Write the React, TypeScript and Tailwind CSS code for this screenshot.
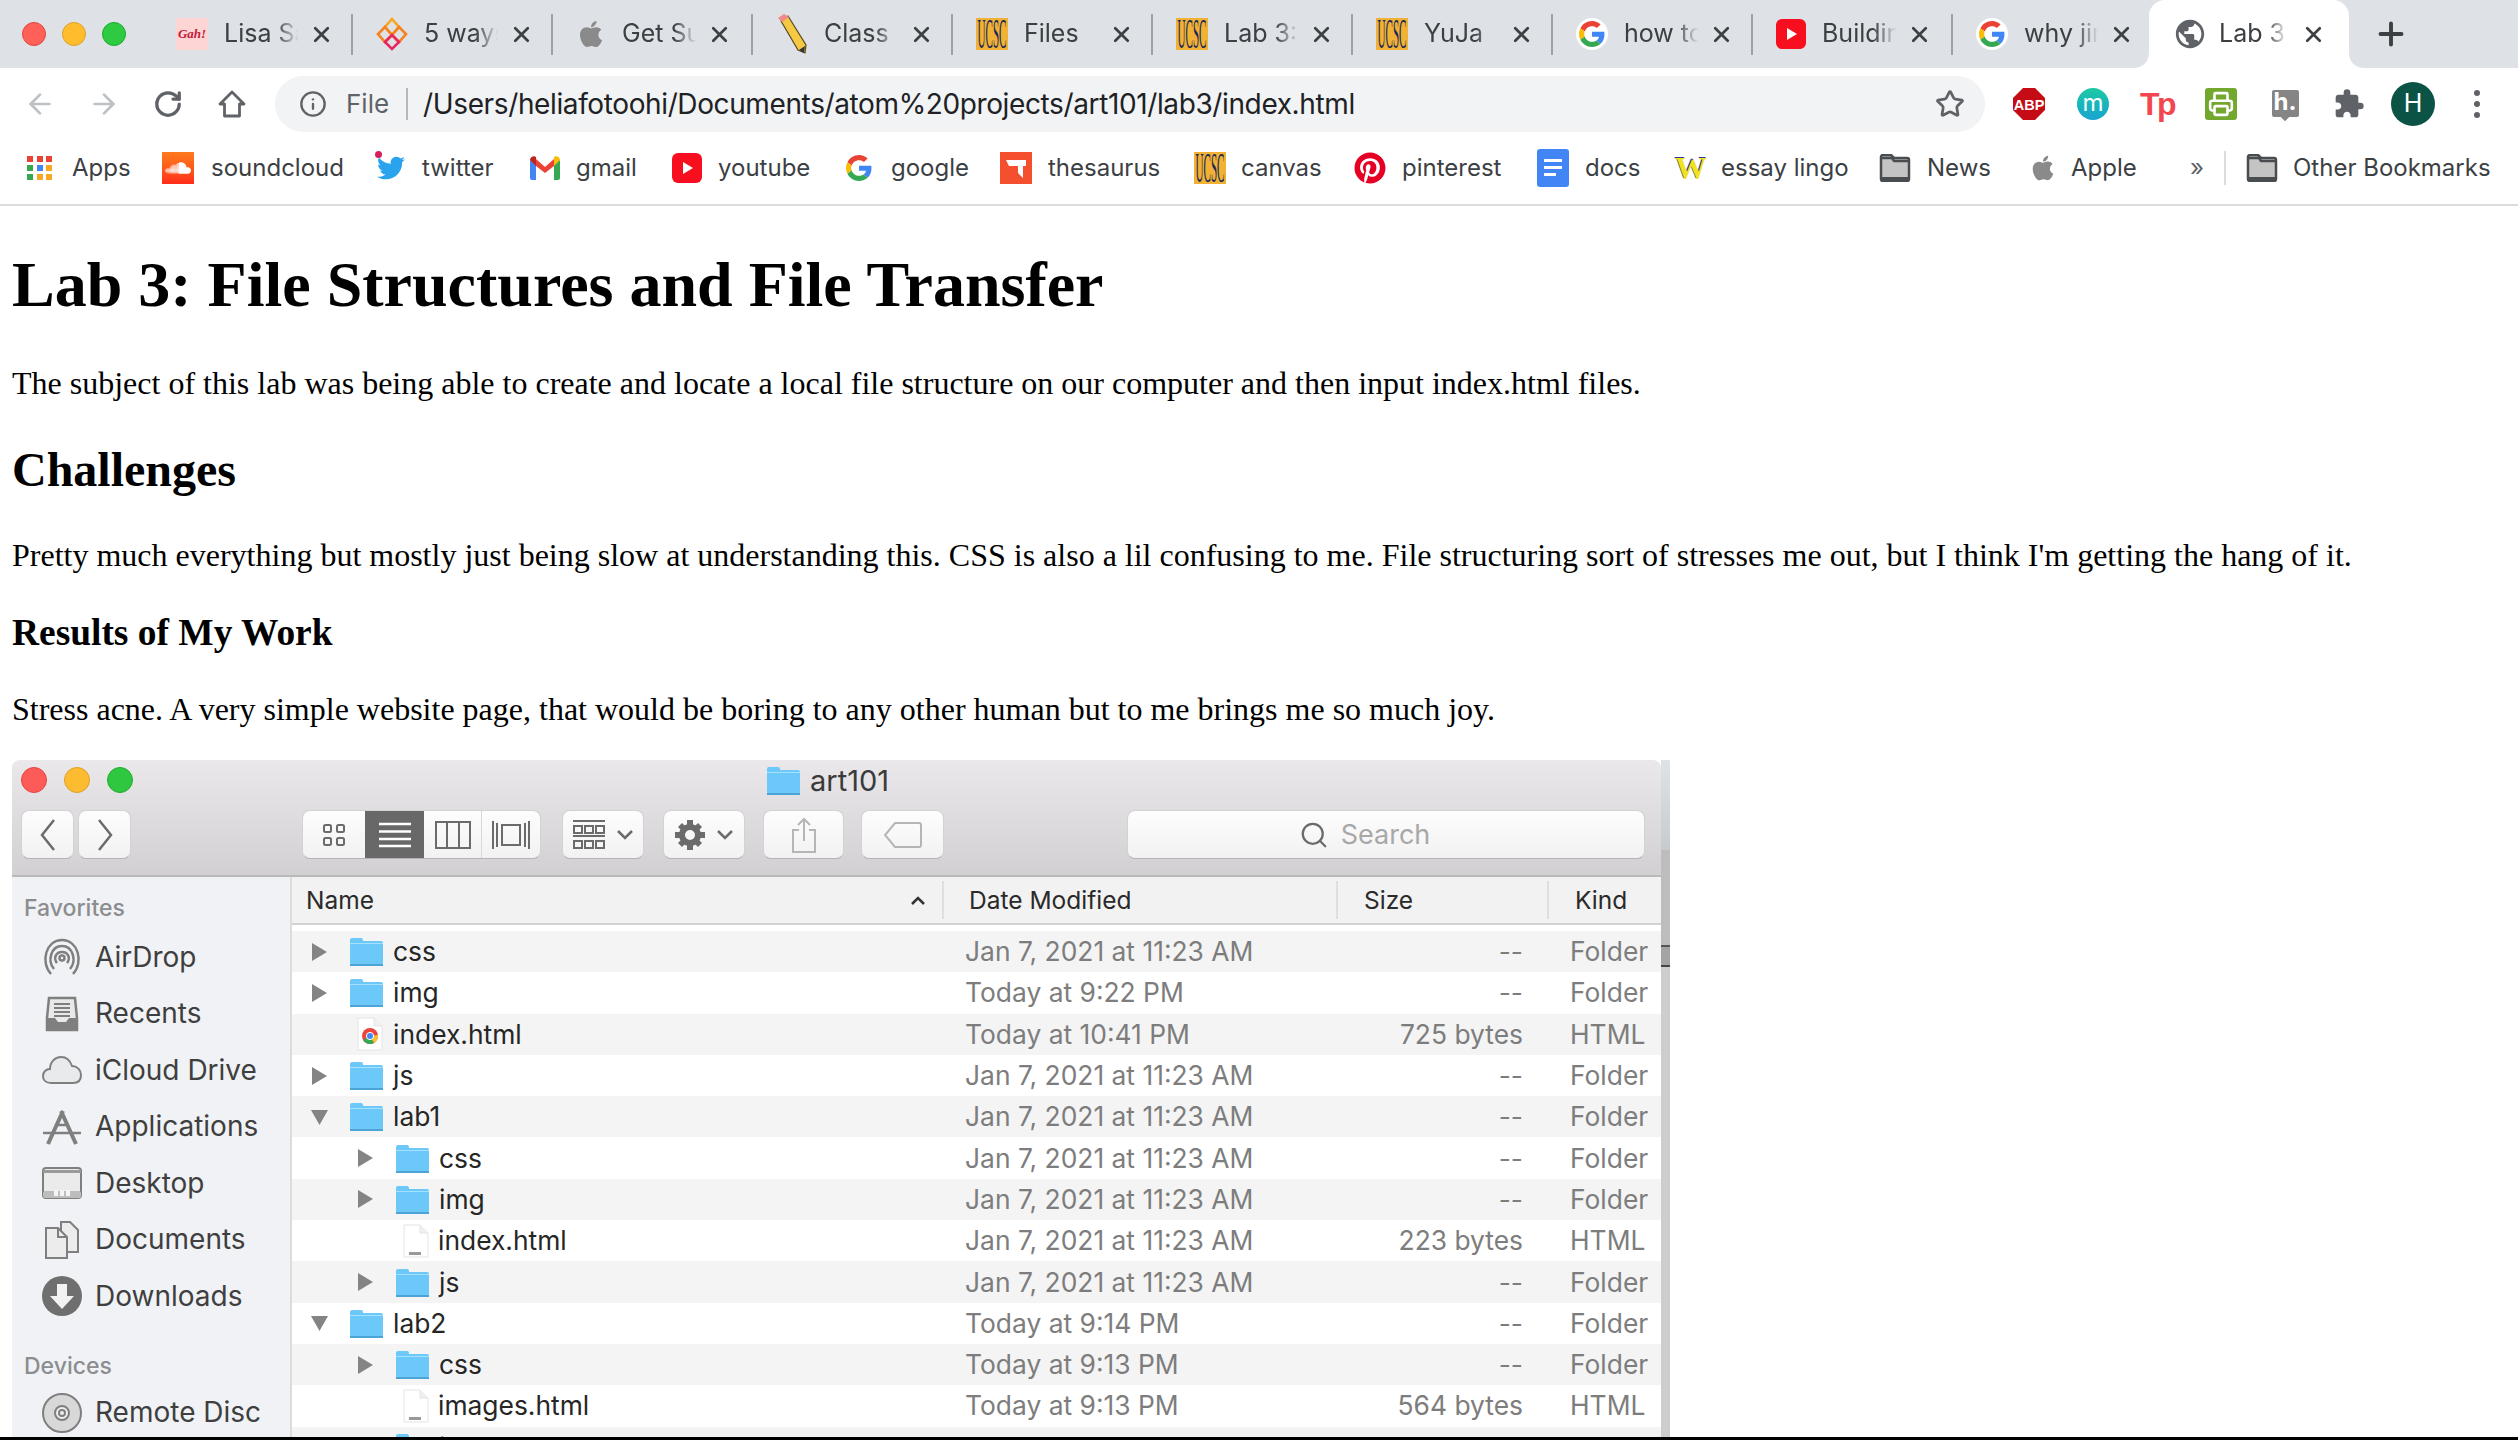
import { ArrowLeft, ArrowRight, Info, Plus, Printer, RotateCw, Search, Star, X } from 'lucide-react';
import { FaApple, FaPinterest, FaSoundcloud, FaTwitter } from 'react-icons/fa';
import { MdExtension, MdPublic } from 'react-icons/md';

function GoogleIcon({ size = 26 }: { size?: number }) {
  return (
    <svg width={size} height={size} viewBox="0 0 48 48">
      <path fill="#EA4335" d="M24 9.5c3.5 0 6.6 1.2 9.1 3.6l6.8-6.8C35.800 2.500 30.400 0 24 0 14.600 0 6.500 5.400 2.600 13.200l7.900 6.100C12.400 13.600 17.700 9.500 24 9.500z" />
      <path fill="#4285F4" d="M47 24.500c0-1.600-.1-3.100-.4-4.500H24v9h12.900c-.6 3-2.200 5.500-4.700 7.200l7.700 6C44.400 38.100 47 31.900 47 24.500z" />
      <path fill="#FBBC05" d="M10.500 28.700c-.5-1.500-.8-3-.8-4.700s.3-3.200.8-4.700l-7.900-6.100C.900 16.500 0 20.100 0 24s.900 7.500 2.600 10.800l7.900-6.100z" />
      <path fill="#34A853" d="M24 48c6.400 0 11.900-2.100 15.900-5.800l-7.700-6c-2.100 1.400-4.900 2.300-8.200 2.300-6.300 0-11.600-4.100-13.500-9.800l-7.900 6.100C6.500 42.600 14.600 48 24 48z" />
    </svg>
  );
}

function UcscIcon() {
  return (
    <svg width="32" height="32" viewBox="0 0 32 32" className="shrink-0">
      <rect width="32" height="32" fill="#f0b135" />
      <text transform="translate(16 30) scale(1 3.800)" textAnchor="middle" fontSize="11" textLength="29" lengthAdjust="spacingAndGlyphs" fontFamily="Liberation Serif" fill="#1c2a55">
        UCSC
      </text>
    </svg>
  );
}

function YoutubeIcon() {
  return (
    <svg width="30" height="32" viewBox="0 0 30 32" className="shrink-0">
      <rect y="1" width="30" height="30" rx="6" fill="#f70f1f" />
      <path d="M11 10l10 6-10 6z" fill="#fff" />
    </svg>
  );
}

function GmailIcon() {
  return (
    <svg width="30" height="24" viewBox="0 0 30 24" className="shrink-0">
      <path d="M0 4v18a2 2 0 002 2h4V8z" fill="#4285f4" />
      <path d="M30 4v18a2 2 0 01-2 2h-4V8z" fill="#34a853" />
      <path d="M6 3l9 8 9-8v7l-9 7-9-7z" fill="#ea4335" />
      <path d="M0 4c0-3 4-5 6-3v9z" fill="#c5221f" />
      <path d="M30 4c0-3-4-5-6-3v9z" fill="#fbbc04" />
    </svg>
  );
}

function AppsIcon() {
  const cols = ['#ea4335', '#ea4335', '#ea4335', '#34a853', '#4285f4', '#f9a825', '#34a853', '#f9a825', '#f9a825'];
  return (
    <div className="grid grid-cols-3 gap-[3px] w-[26px] shrink-0">
      {cols.map((c, i) => (
        <svg key={i} width="6" height="6" viewBox="0 0 6 6">
          <rect width="6" height="6" fill={c} />
        </svg>
      ))}
    </div>
  );
}

function ChromeFolder() {
  return (
    <svg width="32" height="28" viewBox="0 0 32 28" className="shrink-0">
      <path d="M2 3a2 2 0 012-2h8l3 3h13a2 2 0 012 2v19a2 2 0 01-2 2H4a2 2 0 01-2-2z" fill="#c4c4c4" stroke="#4a4d50" strokeWidth="2.500" />
      <path d="M2 4h11l2 3h15" fill="none" stroke="#4a4d50" strokeWidth="2.500" />
      <rect x="2" y="23" width="28" height="4" fill="#4a4d50" />
    </svg>
  );
}

function Soundcloud() {
  return (
    <div className="w-8 h-8 shrink-0 flex items-center justify-center bg-linear-to-b from-[#fe7a1c] to-[#fe2a1a]">
      <FaSoundcloud size={26} color="#fff" />
    </div>
  );
}

function Twitter() {
  return (
    <div className="relative w-8 h-8 shrink-0 flex items-center justify-center">
      <FaTwitter size={28} color="#2aa3ef" />
      <span className="absolute left-0 top-[-1px] w-[7px] h-[7px] rounded-full bg-[#d81e5b]" />
    </div>
  );
}

function Thesaurus() {
  return (
    <svg width="32" height="32" viewBox="0 0 32 32" className="shrink-0">
      <rect width="32" height="32" fill="#f4502f" />
      <path d="M6 8h20v6h-3v12l-5-5v-7H9z" fill="#fff" />
    </svg>
  );
}

function Docs() {
  return (
    <svg width="32" height="38" viewBox="0 0 32 38" className="shrink-0">
      <rect width="32" height="38" rx="3" fill="#4285f4" />
      <rect x="7" y="10" width="18" height="3" fill="#fff" />
      <rect x="7" y="17" width="18" height="3" fill="#fff" />
      <rect x="7" y="24" width="12" height="3" fill="#fff" />
    </svg>
  );
}

const bookmarks: { label: string; icon: React.ReactNode; cls: string; gap: string }[] = [
  { label: 'Apps', icon: <AppsIcon />, cls: 'w-[135px]', gap: 'gap-[19px]' },
  { label: 'soundcloud', icon: <Soundcloud />, cls: 'w-[213px]', gap: 'gap-[17px]' },
  { label: 'twitter', icon: <Twitter />, cls: 'w-[155px]', gap: 'gap-[15px]' },
  { label: 'gmail', icon: <GmailIcon />, cls: 'w-[142px]', gap: 'gap-[16px]' },
  { label: 'youtube', icon: <YoutubeIcon />, cls: 'w-[174px]', gap: 'gap-[16px]' },
  { label: 'google', icon: <GoogleIcon />, cls: 'w-[154px]', gap: 'gap-[19px]' },
  { label: 'thesaurus', icon: <Thesaurus />, cls: 'w-[194px]', gap: 'gap-[16px]' },
  { label: 'canvas', icon: <UcscIcon />, cls: 'w-[160px]', gap: 'gap-[15px]' },
  { label: 'pinterest', icon: <FaPinterest size={32} color="#e60023" className="shrink-0" />, cls: 'w-[183px]', gap: 'gap-[16px]' },
  { label: 'docs', icon: <Docs />, cls: 'w-[138px]', gap: 'gap-[16px]' },
  { label: 'essay lingo', icon: <span className="w-[30px] text-center text-[32px] font-bold text-[#f2e21d] [text-shadow:-1px_-1px_0_#2d3a9c] font-['Liberation_Serif',serif]">W</span>, cls: 'w-[204px]', gap: 'gap-[16px]' },
  { label: 'News', icon: <ChromeFolder />, cls: 'w-[150px]', gap: 'gap-[16px]' },
  { label: 'Apple', icon: <FaApple size={28} color="#8a8a8a" className="shrink-0" />, cls: 'w-[161px]', gap: 'gap-[14px]' },
];

const tabs: { title: string; icon: React.ReactNode }[] = [
  {
    title: 'Lisa Sa',
    icon: (
      <div className="w-8 h-8 shrink-0 bg-[#fdd5d5] flex items-center justify-center text-[13px] italic font-bold text-[#c0213a] font-['Liberation_Serif',serif]">
        Gah!
      </div>
    ),
  },
  {
    title: '5 ways',
    icon: (
      <svg width="32" height="34" viewBox="0 0 32 34" className="shrink-0" fill="none" strokeWidth="2.600">
        <path d="M16 2l7 8-7 8-7-8z" stroke="#f6a623" />
        <path d="M9 10l7 8-7 7-7-8z" stroke="#f5811f" />
        <path d="M23 10l7 7-7 8-7-7z" stroke="#f5811f" />
        <path d="M9 25l7-7 7 7-7 7z" stroke="#e8265e" />
      </svg>
    ),
  },
  { title: 'Get Su', icon: <FaApple size={30} color="#8a8a8a" className="shrink-0" /> },
  {
    title: 'Class I',
    icon: (
      <svg width="32" height="40" viewBox="0 0 32 40" className="shrink-0">
        <path d="M5 7l7-5 18 29 -1 8 -7-3z" fill="#f6c945" stroke="#5b4a1f" strokeWidth="1.200" />
        <path d="M2 4l6-4 5 3-7 5z" fill="#f08a8a" />
        <path d="M23 36l6-4-1 7z" fill="#333" />
      </svg>
    ),
  },
  { title: 'Files', icon: <UcscIcon /> },
  { title: 'Lab 3:', icon: <UcscIcon /> },
  { title: 'YuJa', icon: <UcscIcon /> },
  {
    title: 'how to',
    icon: (
      <div className="w-8 h-8 shrink-0 rounded-full bg-white flex items-center justify-center">
        <GoogleIcon size={26} />
      </div>
    ),
  },
  { title: 'Buildin', icon: <YoutubeIcon /> },
  {
    title: 'why jin',
    icon: (
      <div className="w-8 h-8 shrink-0 rounded-full bg-white flex items-center justify-center">
        <GoogleIcon size={26} />
      </div>
    ),
  },
];

function Tab({ title, icon, last }: { title: string; icon: React.ReactNode; last: boolean }) {
  return (
    <>
      <div className="w-[198px] flex items-center pl-[23px]">
        {icon}
        <span className="ml-4 w-[76px] overflow-hidden whitespace-nowrap text-[25px] text-[#3c4043] [mask-image:linear-gradient(to_right,black_68%,transparent_98%)]">
          {title}
        </span>
        <X size={25} strokeWidth={2.6} color="#3c4043" className="ml-[9px] shrink-0" />
      </div>
      {!last && <div className="w-[2px] h-[41px] bg-[#9da0a5] shrink-0" />}
    </>
  );
}

function TabStrip() {
  return (
    <div className="h-[68px] bg-[#dee1e6] flex items-center">
      <div className="w-[153px] shrink-0 flex items-center gap-4 pl-[22px]">
        <span className="w-6 h-6 rounded-full bg-[#ff6159] border border-[#e0443e]" />
        <span className="w-6 h-6 rounded-full bg-[#ffbd2e] border border-[#dea123]" />
        <span className="w-6 h-6 rounded-full bg-[#2ecb42] border border-[#1aab29]" />
      </div>
      {tabs.map((t, i) => (
        <Tab key={i} title={t.title} icon={t.icon} last={i === tabs.length - 1} />
      ))}
      <div className="relative -ml-[2px] w-[200px] h-[68px] bg-white rounded-t-[16px] flex items-center pl-[24px] shrink-0">
        <svg width="16" height="16" viewBox="0 0 16 16" className="absolute bottom-0 left-[-16px]">
          <path d="M16 0v16H0c10 0 16-6 16-16z" fill="#fff" />
        </svg>
        <svg width="16" height="16" viewBox="0 0 16 16" className="absolute bottom-0 right-[-16px]">
          <path d="M0 0v16h16C6 16 0 10 0 0z" fill="#fff" />
        </svg>
        <MdPublic size={34} color="#5f6368" className="shrink-0" />
        <span className="ml-[12px] w-[70px] overflow-hidden whitespace-nowrap text-[25px] text-[#3c4043] [mask-image:linear-gradient(to_right,black_68%,transparent_98%)]">
          Lab 3:
        </span>
        <X size={25} strokeWidth={2.6} color="#3c4043" className="ml-[12px] shrink-0" />
      </div>
      <Plus size={36} strokeWidth={2.6} color="#3c4043" className="ml-6 shrink-0" />
    </div>
  );
}

function NavBtn({ children }: { children: React.ReactNode }) {
  return <div className="w-16 h-[56px] flex items-center justify-center shrink-0">{children}</div>;
}

function Toolbar() {
  return (
    <div className="h-[69px] bg-white flex items-center pl-2 pt-[2px]">
      <NavBtn><ArrowLeft size={32} strokeWidth={2} color="#bdc1c6" /></NavBtn>
      <NavBtn><ArrowRight size={32} strokeWidth={2} color="#bdc1c6" /></NavBtn>
      <NavBtn><RotateCw size={30} strokeWidth={2.6} color="#5f6368" /></NavBtn>
      <NavBtn>
        <svg width="30" height="30" viewBox="0 0 30 30" fill="none" stroke="#5f6368" strokeWidth="2.800" strokeLinejoin="round">
          <path d="M15 3L3 15h4.500v12h15V15H27z" />
        </svg>
      </NavBtn>
      <div className="ml-[11px] w-[1710px] h-[56px] rounded-full bg-[#f1f3f4] flex items-center pl-[24px] pr-[20px] shrink-0">
        <Info size={28} strokeWidth={2} color="#5f6368" className="shrink-0" />
        <span className="ml-[19px] text-[26px] text-[#5f6368]">File</span>
        <span className="ml-[17px] w-[2px] h-[32px] bg-[#b5b8bc]" />
        <span className="ml-[15px] text-[28px] text-[#202124] whitespace-nowrap tracking-[-0.38px]">/Users/heliafotoohi/Documents/atom%20projects/art101/lab3/index.html</span>
        <Star size={30} strokeWidth={2.2} color="#5f6368" className="ml-auto shrink-0" />
      </div>
      <div className="ml-3 flex items-center">
        <NavBtn>
          <svg width="32" height="32" viewBox="0 0 32 32">
            <path d="M10 0h12l10 10v12L22 32H10L0 22V10z" fill="#c50b13" />
            <text x="16" y="21.500" textAnchor="middle" fontSize="14.500" fontWeight="700" fill="#fff" fontFamily="Liberation Sans">ABP</text>
          </svg>
        </NavBtn>
        <NavBtn>
          <div className="w-8 h-8 rounded-full bg-linear-to-b from-[#1fc9a3] to-[#1ba3d1] flex items-center justify-center text-white text-[24px] leading-none pb-[2px]">m</div>
        </NavBtn>
        <NavBtn>
          <span className="text-[#f2474f] text-[32px] font-extrabold leading-none tracking-[-2.500px] font-['Liberation_Sans',sans-serif]">Tp</span>
        </NavBtn>
        <NavBtn>
          <div className="w-8 h-8 rounded-[3px] bg-[#73a72d] flex items-center justify-center">
            <Printer size={26} strokeWidth={2.4} color="#fff" />
          </div>
        </NavBtn>
        <NavBtn>
          <div className="relative w-[27px] h-[27px] rounded-[2px] bg-[#858585] flex items-center justify-center text-white font-bold text-[24px] leading-none pb-[3px]">
            h.
            <span className="absolute bottom-[-3px] left-[10px] w-[6px] h-[6px] rotate-45 bg-[#858585]" />
          </div>
        </NavBtn>
        <NavBtn><MdExtension size={32} color="#5f6368" /></NavBtn>
        <NavBtn>
          <div className="w-[44px] h-[44px] rounded-full bg-[#0b5345] flex items-center justify-center text-white text-[25px]">H</div>
        </NavBtn>
        <NavBtn>
          <div className="flex flex-col gap-[5px]">
            <span className="w-[6px] h-[6px] rounded-full bg-[#5f6368]" />
            <span className="w-[6px] h-[6px] rounded-full bg-[#5f6368]" />
            <span className="w-[6px] h-[6px] rounded-full bg-[#5f6368]" />
          </div>
        </NavBtn>
      </div>
    </div>
  );
}

function BookmarksBar() {
  return (
    <div className="h-[69px] bg-white border-b-2 border-[#dadce0] flex items-center pl-[27px] pb-[5px] text-[24px] text-[#3c4043]">
      {bookmarks.map((b) => (
        <div key={b.label} className={`${b.cls} ${b.gap} shrink-0 flex items-center whitespace-nowrap`}>
          {b.icon}
          <span>{b.label}</span>
        </div>
      ))}
      <span className="w-[34px] text-[#5f6368]">»</span>
      <span className="w-[2px] h-[34px] bg-[#dadce0]" />
      <div className="ml-[20px] flex items-center gap-[15px] whitespace-nowrap">
        <ChromeFolder />
        <span>Other Bookmarks</span>
      </div>
    </div>
  );
}

function Folder() {
  return (
    <svg width="33" height="29" viewBox="0 0 33 29" className="shrink-0">
      <path d="M0 3a2 2 0 012-2h9a2 2 0 012 2v1h18a2 2 0 012 2v20a2 2 0 01-2 2H2a2 2 0 01-2-2z" fill="#6cc8f9" />
      <path d="M0 6h33v1H0z" fill="#a5e0fd" />
      <path d="M0 27h33v2H0z" fill="#4ba3d6" />
    </svg>
  );
}

function HtmlFile({ chrome }: { chrome?: boolean }) {
  return (
    <svg width="26" height="34" viewBox="0 0 26 34" className="shrink-0">
      <path d="M1 1h16l8 8v24H1z" fill="#fff" stroke="#e4e4e4" />
      <path d="M17 1v8h8" fill="#f0f0f0" stroke="#e4e4e4" />
      {chrome ? (
        <g>
          <circle cx="13" cy="19" r="8" fill="#e8453c" />
          <path d="M13 19l-7 4a8 8 0 0011 3z" fill="#34a853" />
          <path d="M13 19l8-1a8 8 0 01-4 8z" fill="#fbc02d" />
          <circle cx="13" cy="19" r="3.600" fill="#4285f4" stroke="#fff" />
        </g>
      ) : (
        <rect x="6" y="28" width="12" height="3" fill="#9a9a9a" />
      )}
    </svg>
  );
}

function Tri({ open }: { open?: boolean }) {
  return (
    <svg width="17" height="20" viewBox="0 0 17 20" className="shrink-0">
      {open ? <path d="M0 3h17l-8.500 15z" fill="#848484" /> : <path d="M1 1l15 9-15 9z" fill="#848484" />}
    </svg>
  );
}

type Row = { name: string; depth: 0 | 1; kind: 'Folder' | 'HTML'; open?: boolean; chrome?: boolean; date: string; size: string };

const J = 'Jan 7, 2021 at 11:23 AM';
const rows: Row[] = [
  { name: 'css', depth: 0, kind: 'Folder', date: J, size: '--' },
  { name: 'img', depth: 0, kind: 'Folder', date: 'Today at 9:22 PM', size: '--' },
  { name: 'index.html', depth: 0, kind: 'HTML', chrome: true, date: 'Today at 10:41 PM', size: '725 bytes' },
  { name: 'js', depth: 0, kind: 'Folder', date: J, size: '--' },
  { name: 'lab1', depth: 0, kind: 'Folder', open: true, date: J, size: '--' },
  { name: 'css', depth: 1, kind: 'Folder', date: J, size: '--' },
  { name: 'img', depth: 1, kind: 'Folder', date: J, size: '--' },
  { name: 'index.html', depth: 1, kind: 'HTML', date: J, size: '223 bytes' },
  { name: 'js', depth: 1, kind: 'Folder', date: J, size: '--' },
  { name: 'lab2', depth: 0, kind: 'Folder', open: true, date: 'Today at 9:14 PM', size: '--' },
  { name: 'css', depth: 1, kind: 'Folder', date: 'Today at 9:13 PM', size: '--' },
  { name: 'images.html', depth: 1, kind: 'HTML', date: 'Today at 9:13 PM', size: '564 bytes' },
  { name: 'js', depth: 1, kind: 'Folder', date: 'Today at 9:13 PM', size: '--' },
];

function FileRow({ row, odd }: { row: Row; odd: boolean }) {
  return (
    <div className={`h-[41.3px] flex items-center shrink-0 ${odd ? 'bg-[#f4f4f4]' : 'bg-white'}`}>
      <div className={`w-[652px] flex items-center shrink-0 ${row.depth ? 'pl-[65px]' : 'pl-[19px]'}`}>
        {row.kind === 'Folder' ? (
          <>
            <Tri open={row.open} />
            <span className="ml-[22px] flex"><Folder /></span>
            <span className="ml-[10px] text-[#262626]">{row.name}</span>
          </>
        ) : (
          <>
            <span className="ml-[43px] w-[31px] flex justify-center"><HtmlFile chrome={row.chrome} /></span>
            <span className={`${row.depth ? 'ml-[7px]' : 'ml-[8px]'} text-[#262626]`}>{row.name}</span>
          </>
        )}
      </div>
      <div className="w-[394px] pl-[21px] shrink-0 text-[#7d7d7d] whitespace-nowrap">{row.date}</div>
      <div className="w-[211px] pr-[26px] shrink-0 text-right text-[#7d7d7d]">{row.size}</div>
      <div className="pl-[21px] text-[#7d7d7d]">{row.kind}</div>
    </div>
  );
}

function SideItem({ label, icon }: { label: string; icon: React.ReactNode }) {
  return (
    <div className="h-[56.500px] flex items-center pl-[30px] shrink-0">
      <span className="w-10 flex justify-center">{icon}</span>
      <span className="ml-[13px] text-[#3f3f3f] whitespace-nowrap">{label}</span>
    </div>
  );
}

const G = '#7f7f7f';

function Sidebar() {
  return (
    <div className="w-[280px] shrink-0 bg-[#f0f2f5] border-r-2 border-[#dcdcdc] text-[28px] pt-[16px] overflow-hidden">
      <div className="pl-3 h-[30px] text-[23px] font-medium leading-[30px] text-[#8b8d90]">Favorites</div>
      <div className="mt-[6px]">
        <SideItem
          label="AirDrop"
          icon={
            <svg width="40" height="38" viewBox="0 0 40 38" fill="none" stroke={G} strokeWidth="2.500">
              <path d="M9 36C-2 24 4 2 20 2s22 22 11 34" />
              <path d="M12 31C5 23 9 8 20 8s15 15 8 23" />
              <path d="M15 25c-4-5-1-11 5-11s9 6 5 11" />
              <circle cx="20" cy="20" r="2.500" />
            </svg>
          }
        />
        <SideItem
          label="Recents"
          icon={
            <svg width="34" height="36" viewBox="0 0 34 36">
              <path d="M4 2h26l2 20v12H2V22z" fill="#e9e9e9" stroke={G} strokeWidth="2.500" />
              <path d="M9 8h16M9 12h16M9 16h16M9 20h16" stroke={G} strokeWidth="2" />
              <path d="M2 22h8l3 4h8l3-4h8v12H2z" fill={G} />
            </svg>
          }
        />
        <SideItem
          label="iCloud Drive"
          icon={
            <svg width="40" height="30" viewBox="0 0 40 30">
              <path d="M9 28C3 28 1 24 1 21c0-4 3-7 7-7 0-7 5-12 11-12 5 0 9 3 11 9 5 0 9 4 9 9 0 5-3 8-8 8z" fill="#e9eaec" stroke={G} strokeWidth="2" />
            </svg>
          }
        />
        <SideItem
          label="Applications"
          icon={
            <svg width="40" height="38" viewBox="0 0 40 38" fill="none" stroke={G}>
              <path d="M6 36L21 3M34 36L19 3" strokeWidth="4" />
              <path d="M1 25h38" strokeWidth="2.500" />
              <path d="M15 17h10" strokeWidth="2.500" />
            </svg>
          }
        />
        <SideItem
          label="Desktop"
          icon={
            <svg width="40" height="32" viewBox="0 0 40 32">
              <rect x="1" y="1" width="38" height="30" rx="3" fill="#ebebeb" stroke={G} strokeWidth="2" />
              <rect x="1" y="3" width="38" height="3" fill="#9a9a9a" />
              <rect x="1" y="24" width="38" height="7" rx="2" fill="#bdbdbd" />
              <path d="M12 23h4v6h-4zM18 23h4v6h-4zM24 23h4v6h-4z" fill="#f4f4f4" />
            </svg>
          }
        />
        <SideItem
          label="Documents"
          icon={
            <svg width="36" height="38" viewBox="0 0 36 38" fill="#ececec" stroke={G} strokeWidth="2">
              <path d="M17 1h9l8 8v22H17z" />
              <path d="M2 7h12l9 9v21H2z" />
              <path d="M14 7v9h9" fill="none" />
            </svg>
          }
        />
        <SideItem
          label="Downloads"
          icon={
            <svg width="40" height="40" viewBox="0 0 40 40">
              <circle cx="20" cy="20" r="20" fill="#6f6f6f" />
              <path d="M15 8h10v12h7L20 33 8 20h7z" fill="#f2f2f2" />
            </svg>
          }
        />
      </div>
      <div className="mt-[26px] pl-3 h-[30px] text-[23px] font-medium leading-[30px] text-[#8b8d90]">Devices</div>
      <div className="mt-1">
        <SideItem
          label="Remote Disc"
          icon={
            <svg width="40" height="40" viewBox="0 0 40 40" fill="none" stroke={G} strokeWidth="2">
              <circle cx="20" cy="20" r="19" fill="#d8d8d8" />
              <circle cx="20" cy="20" r="7" fill="#eeeeee" />
              <circle cx="20" cy="20" r="3" />
            </svg>
          }
        />
      </div>
    </div>
  );
}

function MacBtn({ cls, children }: { cls: string; children?: React.ReactNode }) {
  return (
    <div className={`${cls} h-[49px] rounded-[8px] bg-linear-to-b from-[#fdfdfd] to-[#f2f2f2] border border-[#d2d2d2] border-b-[#b4b4b4] flex items-center justify-center shrink-0`}>
      {children}
    </div>
  );
}

function FinderToolbar() {
  return (
    <div className="h-[117px] bg-linear-to-b from-[#eae8ea] to-[#d2d0d2] border-b-2 border-[#b9b9b9] shrink-0 rounded-t-[8px]">
      <div className="h-[40px] flex items-center pl-[9px]">
        <div className="flex gap-[17px]">
          <span className="w-[26px] h-[26px] rounded-full bg-[#fc5b57] border border-[#e2443f]" />
          <span className="w-[26px] h-[26px] rounded-full bg-[#fdbc2f] border border-[#dfa023]" />
          <span className="w-[26px] h-[26px] rounded-full bg-[#2fc73f] border border-[#1dad2b]" />
        </div>
        <span className="ml-[634px] flex"><Folder /></span>
        <span className="ml-[10px] text-[29px] text-[#3a3a3a]">art101</span>
      </div>
      <div className="flex items-center pl-[9px] mt-[10px]">
        <MacBtn cls="w-[53px]">
          <svg width="18" height="34" viewBox="0 0 18 34" fill="none" stroke="#6b6b6b" strokeWidth="2.500"><path d="M15 2L3 17l12 15" /></svg>
        </MacBtn>
        <MacBtn cls="ml-1 w-[53px]">
          <svg width="18" height="34" viewBox="0 0 18 34" fill="none" stroke="#6b6b6b" strokeWidth="2.500"><path d="M3 2l12 15L3 32" /></svg>
        </MacBtn>
        <div className="ml-[171px] w-[239px] h-[49px] flex rounded-[8px] overflow-hidden border border-[#d2d2d2] border-b-[#b4b4b4] shrink-0 bg-linear-to-b from-[#fdfdfd] to-[#f2f2f2]">
          <div className="w-[62px] flex items-center justify-center">
            <svg width="22" height="22" viewBox="0 0 22 22" fill="none" stroke="#6b6b6b" strokeWidth="2">
              <rect x="1" y="1" width="7" height="7" rx="1.500" /><rect x="14" y="1" width="7" height="7" rx="1.500" />
              <rect x="1" y="14" width="7" height="7" rx="1.500" /><rect x="14" y="14" width="7" height="7" rx="1.500" />
            </svg>
          </div>
          <div className="w-[59px] bg-[#686868] flex items-center justify-center">
            <svg width="32" height="26" viewBox="0 0 32 26" stroke="#fff" strokeWidth="2.500"><path d="M0 2h32M0 9.500h32M0 17h32M0 24h32" /></svg>
          </div>
          <div className="w-[58px] border-r border-[#d8d8d8] flex items-center justify-center">
            <svg width="36" height="28" viewBox="0 0 36 28" fill="none" stroke="#6b6b6b" strokeWidth="2"><rect x="1" y="1" width="34" height="26" /><path d="M12 1v26M24 1v26" /></svg>
          </div>
          <div className="flex-1 flex items-center justify-center">
            <svg width="40" height="30" viewBox="0 0 40 30" fill="none" stroke="#6b6b6b" strokeWidth="2"><rect x="11" y="5" width="18" height="20" /><path d="M2 1v28M6 3v24M34 3v24M38 1v28" /></svg>
          </div>
        </div>
        <MacBtn cls="ml-[21px] w-[82px] gap-3">
          <svg width="32" height="30" viewBox="0 0 32 30" fill="none" stroke="#6b6b6b" strokeWidth="2">
            <path d="M0 1h32M0 16h32" /><rect x="1" y="6" width="8" height="7" /><rect x="12" y="6" width="8" height="7" /><rect x="23" y="6" width="8" height="7" />
            <rect x="1" y="21" width="8" height="7" /><rect x="12" y="21" width="8" height="7" /><rect x="23" y="21" width="8" height="7" />
          </svg>
          <svg width="16" height="10" viewBox="0 0 16 10" fill="none" stroke="#6b6b6b" strokeWidth="2.500"><path d="M1 1l7 7 7-7" /></svg>
        </MacBtn>
        <MacBtn cls="ml-[19px] w-[82px] gap-3">
          <svg width="30" height="30" viewBox="0 0 30 30">
            <circle cx="15" cy="15" r="8" fill="none" stroke="#6b6b6b" strokeWidth="6" />
            <path d="M12 0h6v6h-6zM12 24h6v6h-6zM0 12h6v6H0zM24 12h6v6h-6zM3 7l4-4 4 4-4 4zM19 7l4-4 4 4-4 4zM3 23l4-4 4 4-4 4zM19 23l4-4 4 4-4 4z" fill="#6b6b6b" />
          </svg>
          <svg width="16" height="10" viewBox="0 0 16 10" fill="none" stroke="#6b6b6b" strokeWidth="2.500"><path d="M1 1l7 7 7-7" /></svg>
        </MacBtn>
        <MacBtn cls="ml-[18px] w-[81px]">
          <svg width="24" height="36" viewBox="0 0 24 36" fill="none" stroke="#b5b5b5" strokeWidth="2"><path d="M7 13H1v22h22V13h-6M12 24V2M6 8l6-6 6 6" /></svg>
        </MacBtn>
        <MacBtn cls="ml-[17px] w-[83px]">
          <svg width="38" height="26" viewBox="0 0 38 26" fill="none" stroke="#b5b5b5" strokeWidth="2"><path d="M11 1h24a2 2 0 012 2v20a2 2 0 01-2 2H11L1 13z" /></svg>
        </MacBtn>
        <MacBtn cls="ml-[183px] w-[518px] gap-[12px] pr-[43px] text-[#a8a8a8] text-[27px]">
          <Search size={30} strokeWidth={1.8} color="#6b6b6b" />
          <span>Search</span>
        </MacBtn>
      </div>
    </div>
  );
}

function Finder() {
  return (
    <div className="w-[1658px] h-[677px] flex">
      <div className="w-[1649px] shrink-0 flex flex-col overflow-hidden text-[26.400px] font-['Inter',sans-serif]">
        <FinderToolbar />
        <div className="flex-1 flex min-h-0">
          <Sidebar />
          <div className="flex-1 flex flex-col min-w-0 overflow-hidden bg-white">
            <div className="h-[48px] shrink-0 bg-[#f2f2f2] border-b-2 border-[#d2d2d2] flex items-center text-[#2a2a2a] text-[24.500px]">
              <div className="w-[652px] pl-[14px] pr-[17px] flex items-center justify-between border-r-2 border-[#dedede] h-[38px] shrink-0">
                <span>Name</span>
                <svg width="14" height="9" viewBox="0 0 14 9" fill="none" stroke="#333" strokeWidth="2.500"><path d="M1 8l6-6 6 6" /></svg>
              </div>
              <div className="w-[394px] pl-[25px] border-r-2 border-[#dedede] h-[38px] flex items-center shrink-0">Date Modified</div>
              <div className="w-[211px] pl-[26px] border-r-2 border-[#dedede] h-[38px] flex items-center shrink-0">Size</div>
              <div className="pl-[26px]">Kind</div>
            </div>
            <div className="h-[6px] shrink-0" />
            {rows.map((r, i) => (
              <FileRow key={i} row={r} odd={i % 2 === 0} />
            ))}
          </div>
        </div>
      </div>
      <div className="flex-1 flex flex-col">
        <div className="h-[90px] bg-linear-to-b from-[#dfe3e6] to-[#c8cbce]" />
        <div className="h-[95px] bg-[#bdbdbd]" />
        <div className="h-[2px] bg-[#555]" />
        <div className="h-[18px] bg-[#a4a4a4]" />
        <div className="h-[2px] bg-[#444]" />
        <div className="flex-1 bg-[#cdcdcd]" />
      </div>
    </div>
  );
}

export default function App() {
  return (
    <div className="h-screen flex flex-col overflow-hidden bg-white font-['Inter',sans-serif]">
      <TabStrip />
      <Toolbar />
      <BookmarksBar />
      <div className="flex-1 min-h-0 overflow-hidden px-3 font-['Liberation_Serif',serif] text-black text-[32px] leading-[37px]">
        <h1 className="text-[64px] leading-[74px] font-bold mt-[42px] mb-[43px] whitespace-nowrap">Lab 3: File Structures and File Transfer</h1>
        <p className="my-8 whitespace-nowrap">The subject of this lab was being able to create and locate a local file structure on our computer and then input index.html files.</p>
        <h2 className="text-[48px] leading-[55px] font-bold my-[40px]">Challenges</h2>
        <p className="my-8 whitespace-nowrap">Pretty much everything but mostly just being slow at understanding this. CSS is also a lil confusing to me. File structuring sort of stresses me out, but I think I'm getting the hang of it.</p>
        <h3 className="text-[37.440px] leading-[43px] font-bold my-[37px]">Results of My Work</h3>
        <p className="mt-[37px] mb-[32px] whitespace-nowrap">Stress acne. A very simple website page, that would be boring to any other human but to me brings me so much joy.</p>
        <Finder />
      </div>
      <div className="h-[3px] bg-black shrink-0" />
    </div>
  );
}
